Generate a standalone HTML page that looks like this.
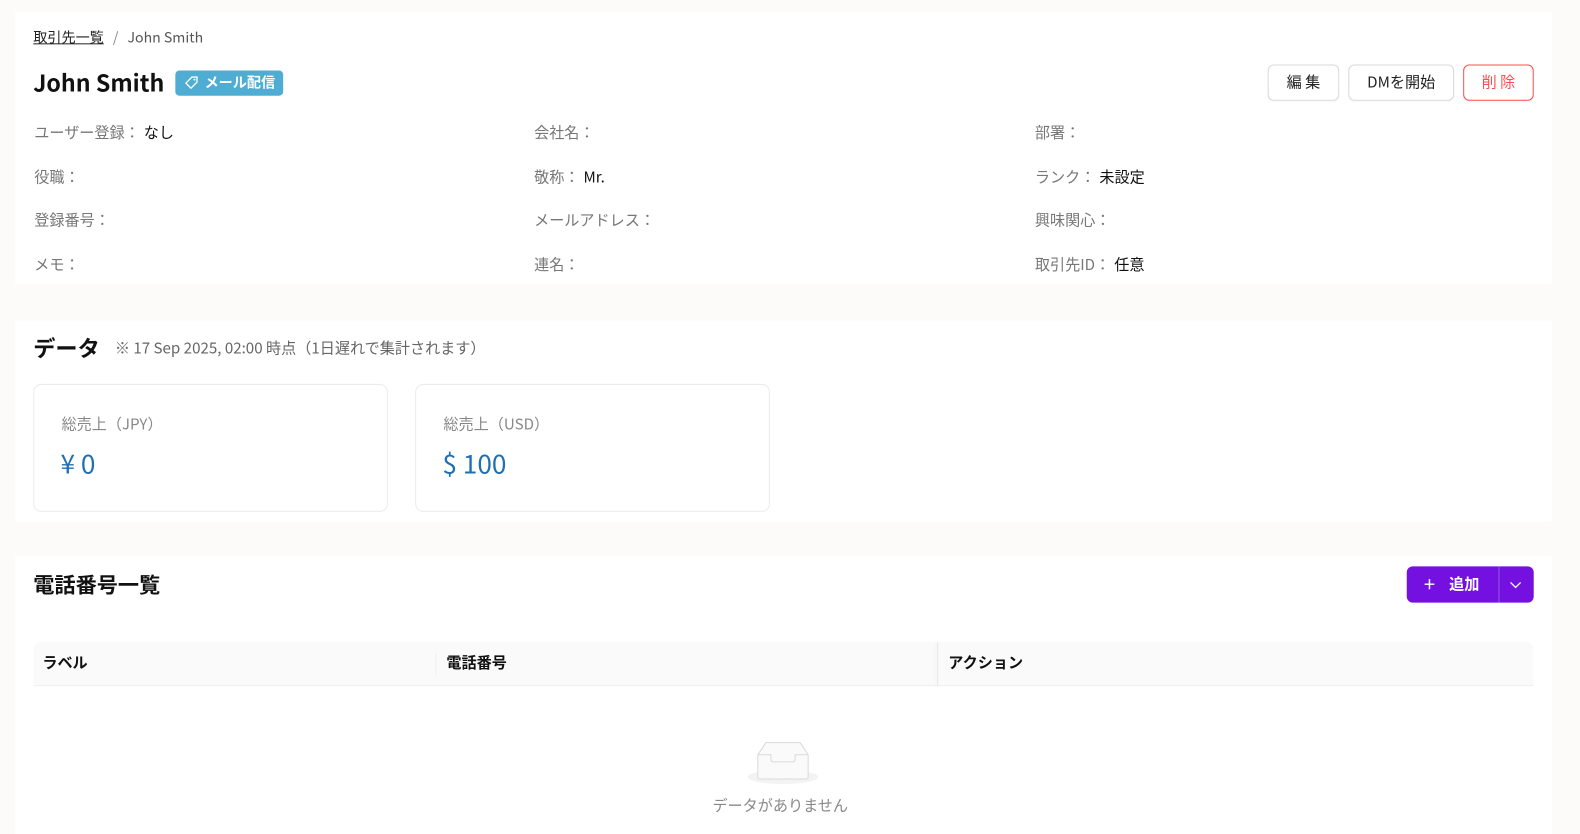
<!DOCTYPE html>
<html style="overflow:hidden"><head><meta charset="utf-8"><style>
*{box-sizing:border-box;margin:0;padding:0}
html,body{width:1580px;height:834px;overflow:hidden}
body{background:#fcfbfa;font-family:"Noto Sans CJK JP","Liberation Sans",sans-serif;color:#222;position:relative}
#w{position:absolute;left:0;top:0;width:1580px;height:834px;transform:scale(1.0077);transform-origin:0 0}
.card{position:absolute;left:15px;width:1525px;background:#fff}
.abs{position:absolute;white-space:nowrap}
.lbl{color:#777;font-size:15px}
.val{color:#111;font-size:15px;margin-left:4px}
.btn{position:absolute;top:64px;height:36px;border:1px solid #d9d9d9;border-radius:6px;background:#fff;font-size:15px;text-align:center;line-height:34px;box-shadow:0 2px 0 rgba(0,0,0,.02)}
.stat{position:absolute;top:381px;width:352px;height:127px;border:1px solid #ebebeb;border-radius:8px;background:#fff}
.th{position:absolute;top:647px;font-size:15px;font-weight:bold;color:#111}
</style></head><body><div id="w">
<div class="card" style="top:12px;height:270px"></div>
<div class="card" style="top:318px;height:200px"></div>
<div class="card" style="top:552px;height:290px"></div>

<div class="abs" style="left:33px;top:27px;font-size:14px;color:#222"><span style="text-decoration:underline">取引先一覧</span><span style="color:#888;margin:0 9px">/</span><span style="color:#555">John Smith</span></div>
<div class="abs" style="left:33px;top:64px;font-size:23px;font-weight:bold;color:#111">John Smith</div>
<div class="abs" style="left:174px;top:70px;width:107px;height:25px;background:#4fadd3;border-radius:4px;color:#fff;font-size:14px;font-weight:bold;line-height:25px;padding-left:9px">
<svg width="14" height="14" viewBox="0 0 14 14" style="vertical-align:-2px;margin-right:6px"><path d="M7.5 1.5h5v5l-6 6-5-5z" fill="none" stroke="#fff" stroke-width="1.3"/><circle cx="10" cy="4" r="1" fill="#fff"/></svg>メール配信</div>

<div class="btn" style="left:1258px;width:71px">編 集</div>
<div class="btn" style="left:1338px;width:105px">DMを開始</div>
<div class="btn" style="left:1452px;width:70px;border-color:#ff4d4f;color:#ff4d4f">削 除</div>

<div class="abs" style="left:34px;top:118px"><span class="lbl">ユーザー登録：</span><span class="val">なし</span></div>
<div class="abs" style="left:530px;top:118px"><span class="lbl">会社名：</span></div>
<div class="abs" style="left:1027px;top:118px"><span class="lbl">部署：</span></div>
<div class="abs" style="left:34px;top:162px"><span class="lbl">役職：</span></div>
<div class="abs" style="left:530px;top:162px"><span class="lbl">敬称：</span><span class="val">Mr.</span></div>
<div class="abs" style="left:1027px;top:162px"><span class="lbl">ランク：</span><span class="val">未設定</span></div>
<div class="abs" style="left:34px;top:205px"><span class="lbl">登録番号：</span></div>
<div class="abs" style="left:530px;top:205px"><span class="lbl">メールアドレス：</span></div>
<div class="abs" style="left:1027px;top:205px"><span class="lbl">興味関心：</span></div>
<div class="abs" style="left:34px;top:249px"><span class="lbl">メモ：</span></div>
<div class="abs" style="left:530px;top:249px"><span class="lbl">連名：</span></div>
<div class="abs" style="left:1027px;top:249px"><span class="lbl">取引先ID：</span><span class="val">任意</span></div>

<div class="abs" style="left:33px;top:329px;font-size:22px;font-weight:bold;color:#111">データ</div>
<div class="abs" style="left:114px;top:335px;font-size:15px;color:#666">※ 17 Sep 2025, 02:00 時点（1日遅れで集計されます）</div>
<div class="stat" style="left:33px"><div class="abs" style="left:27px;top:28px;font-size:15px;color:#888">総売上（JPY）</div><div class="abs" style="left:26px;top:59px;font-size:26px;color:#1e6fb5">¥ 0</div></div>
<div class="stat" style="left:412px"><div class="abs" style="left:27px;top:28px;font-size:15px;color:#888">総売上（USD）</div><div class="abs" style="left:26px;top:59px;font-size:26px;color:#1e6fb5">$ 100</div></div>

<div class="abs" style="left:33px;top:565px;font-size:21px;font-weight:bold;color:#111">電話番号一覧</div>
<div class="abs" style="left:1396px;top:562px;width:126px;height:36px;background:#7410e0;border-radius:6px;color:#fff;font-size:15px;font-weight:bold;line-height:36px">
<span style="position:absolute;left:17px;font-weight:normal;font-size:20px;top:-1px">+</span><span style="position:absolute;left:42px">追加</span>
<span style="position:absolute;left:91px;top:0;width:1px;height:36px;background:#9a55ea"></span>
<svg style="position:absolute;left:102px;top:15px" width="12" height="8" viewBox="0 0 12 8"><path d="M1 1l5 5 5-5" fill="none" stroke="#fff" stroke-width="1.3"/></svg></div>

<div class="abs" style="left:33px;top:637px;width:1489px;height:44px;background:#fafafa;border-bottom:1px solid #ececec;border-radius:8px 8px 0 0"></div>
<div class="abs" style="left:432px;top:648px;width:1px;height:22px;background:#eee"></div>
<div class="abs" style="left:930px;top:637px;width:1px;height:44px;background:#e6e6e6;box-shadow:-2px 0 4px rgba(0,0,0,.05)"></div>
<div class="th" style="left:42px">ラベル</div>
<div class="th" style="left:443px">電話番号</div>
<div class="th" style="left:941px">アクション</div>

<svg class="abs" style="left:740px;top:733px" width="74" height="48" viewBox="0 0 74 48"><ellipse cx="37" cy="38" rx="35" ry="7" fill="#f3f3f3"/><path d="M12 16l8-12h34l8 12v22a2 2 0 0 1-2 2H14a2 2 0 0 1-2-2z" fill="#fafafa" stroke="#d9d9d9" stroke-width="1"/><path d="M12 16h13v5a2 2 0 0 0 2 2h20a2 2 0 0 0 2-2v-5h13" fill="none" stroke="#d9d9d9" stroke-width="1"/></svg>
<div class="abs" style="left:707px;top:789px;font-size:15px;color:#888">データがありません</div>
</div></body></html>
